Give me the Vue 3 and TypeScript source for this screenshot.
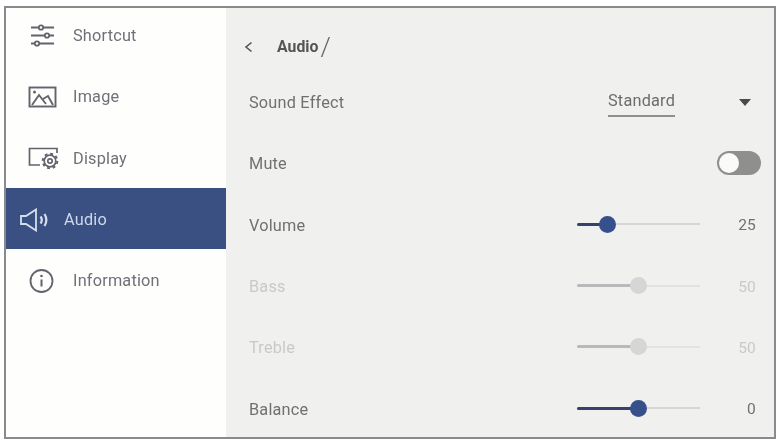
<script setup lang="ts">
interface Row {
  label: string
  value: number
  pct: number
  disabled?: boolean
}
const navItems = [
  { id: 'shortcut', label: 'Shortcut' },
  { id: 'image', label: 'Image' },
  { id: 'display', label: 'Display' },
  { id: 'audio', label: 'Audio' },
  { id: 'info', label: 'Information' },
]
const sliders: Row[] = [
  { label: 'Volume', value: 25, pct: 25 },
  { label: 'Bass', value: 50, pct: 50, disabled: true },
  { label: 'Treble', value: 50, pct: 50, disabled: true },
  { label: 'Balance', value: 0, pct: 50 },
]
</script>

<template>
  <div class="frame">
    <aside class="side">
      <div v-for="n in navItems" :key="n.id" class="nav" :class="{ active: n.id === 'audio' }">
        <span class="ic">
          <svg v-if="n.id === 'shortcut'" width="28" height="24" viewBox="0 0 28 24" fill="none" stroke="currentColor" stroke-width="1.8">
            <path d="M3 3.500h23M3 11.500h23M3 19.500h23" />
            <circle cx="13" cy="3.500" r="2.200" fill="#fefefc" />
            <circle cx="19" cy="11.500" r="2.200" fill="#fefefc" />
            <circle cx="9" cy="19.500" r="2.200" fill="#fefefc" />
          </svg>
          <svg v-else-if="n.id === 'image'" width="29" height="22" viewBox="0 0 29 22" fill="none" stroke="currentColor" stroke-width="1.9">
            <rect x="1.500" y="1.500" width="26" height="19" />
            <path d="M4 19l7-10 7 9" />
            <path d="M15 13l5-3 5 9" />
            <circle cx="6.500" cy="6" r="1.500" fill="currentColor" stroke="none" />
          </svg>
          <svg v-else-if="n.id === 'display'" width="32" height="24" viewBox="0 0 32 24" fill="none" stroke="currentColor" stroke-width="1.700">
            <path d="M12 19H1.500V2.500H29V7" />
            <circle cx="22" cy="15" r="5.800" fill="#fefefc" />
            <circle cx="22" cy="15" r="2.200" />
            <circle cx="22" cy="15" r="7.300" stroke-width="2" stroke-dasharray="2.900 2.830" />
          </svg>
          <svg v-else-if="n.id === 'audio'" width="30" height="24" viewBox="0 0 30 24" fill="none" stroke="currentColor" stroke-width="1.800">
            <path d="M2 8h5L17 1.500v21L7 16H2z" />
            <path d="M21.500 8.500c1.500 2 1.500 5 0 7" stroke-width="2.200" />
            <path d="M25.500 6c2.500 4 2.500 8 0 12" stroke-width="2.200" />
          </svg>
          <svg v-else width="26" height="26" viewBox="0 0 26 26" fill="none" stroke="currentColor" stroke-width="1.800">
            <circle cx="13.500" cy="13" r="11" />
            <path d="M13.500 11.500v7" stroke-width="2" />
            <circle cx="13.500" cy="8" r="1.300" fill="currentColor" stroke="none" />
          </svg>
        </span>
        <span class="nav-label">{{ n.label }}</span>
      </div>
    </aside>
    <main class="panel">
      <header class="crumb">
        <svg class="back" width="9" height="12" viewBox="0 0 9 12" fill="none" stroke="#555" stroke-width="1.600">
          <path d="M7.500 1.500L2 6l5.500 4.500" />
        </svg>
        <span class="title">Audio</span>
        <span class="slash">/</span>
      </header>
      <div class="rows">
        <div class="row">
          <span class="label">Sound Effect</span>
          <div class="select">
            <span class="sel-val">Standard</span>
            <span class="caret"></span>
          </div>
        </div>
        <div class="row">
          <span class="label">Mute</span>
          <span class="toggle"><span class="knob"></span></span>
        </div>
        <div v-for="s in sliders" :key="s.label" class="row" :class="{ off: s.disabled }">
          <span class="label">{{ s.label }}</span>
          <div class="ctrl">
            <div class="track">
              <div class="fill" :style="{ width: s.pct + '%' }"></div>
              <div class="thumb" :style="{ left: s.pct + '%' }"></div>
            </div>
            <span class="num">{{ s.value }}</span>
          </div>
        </div>
      </div>
    </main>
  </div>
</template>

<style>
html, body { margin: 0; background: #fff; }
</style>

<style scoped>
.frame {
  box-sizing: border-box;
  width: 772px;
  height: 433px;
  margin: 6px 0 0 4px;
  border: 2px solid #8a8a8a;
  display: flex;
  overflow: hidden;
  font-family: Roboto, "Liberation Sans", sans-serif;
  font-size: 16.300px;
  letter-spacing: 0.2px;
  color: #6d6d6f;
  filter: blur(0.35px);
}
.side {
  width: 220px;
  flex: none;
  background: #fefefc;
  display: flex;
  flex-direction: column;
}
.nav {
  box-sizing: border-box;
  height: 61.300px;
  padding: 2px 0 0 22px;
  display: flex;
  align-items: center;
  color: #6f7078;
  flex: none;
}
.nav:first-child { margin-top: -4px; }
.ic {
  width: 45px;
  flex: none;
  display: flex;
  align-items: center;
  color: #62636d;
}
.nav.active {
  background: #3a5082;
  color: #cfd8ea;
  padding-left: 13px;
}
.nav.active .ic { color: #d6deee; }
.panel {
  flex: 1;
  background: #f0f0ee;
  display: flex;
  flex-direction: column;
  min-width: 0;
}
.crumb {
  box-sizing: border-box;
  height: 64px;
  padding: 13px 0 0 18px;
  display: flex;
  align-items: center;
  flex: none;
}
.back { margin-right: 24px; }
.title { font-weight: 700; font-size: 15.800px; letter-spacing: 0; color: #555; }
.slash { font-size: 26px; font-weight: 300; color: #666; margin-left: 2px; line-height: 1; }
.rows { display: flex; flex-direction: column; }
.row {
  height: 61.300px;
  display: flex;
  align-items: center;
  justify-content: space-between;
  padding: 0 18px 0 23px;
  flex: none;
}
.label { color: #707070; }
.select { display: flex; align-items: center; }
.sel-val {
  width: 67px;
  padding: 0 0 5px;
  border-bottom: 2px solid #8f8f8f;
  margin-top: 2px;
  color: #6c6c6c;
}
.caret {
  width: 0;
  height: 0;
  margin-left: 64px;
  margin-right: 5px;
  border-left: 6px solid transparent;
  border-right: 6px solid transparent;
  border-top: 7px solid #4a4a4a;
}
.toggle {
  width: 44px;
  height: 24px;
  margin: -1px -5px 0 0;
  border-radius: 12px;
  background: #8f8f8d;
  display: block;
  position: relative;
}
.knob {
  position: absolute;
  left: 2px;
  top: 2px;
  width: 20px;
  height: 20px;
  border-radius: 50%;
  background: #fafaf8;
}
.ctrl { display: flex; align-items: center; }
.track {
  position: relative;
  width: 123px;
  height: 2px;
  margin-bottom: 2px;
  background: #d6d6d4;
}
.fill {
  position: absolute;
  left: 0;
  top: -0.500px;
  height: 3px;
  background: #36426a;
  border-radius: 2px;
}
.thumb {
  position: absolute;
  top: 1px;
  width: 17px;
  height: 17px;
  margin: -8.500px 0 0 -8.500px;
  border-radius: 50%;
  background: #36508c;
}
.num {
  width: 56px;
  text-align: right;
  color: #707070;
  font-size: 15.500px;
}
.off .label, .off .num { color: #c9c9c7; }
.off .fill { background: #b9b9bb; }
.off .track { background: #e2e2e0; }
.off .thumb { background: #d6d6d6; }
</style>
